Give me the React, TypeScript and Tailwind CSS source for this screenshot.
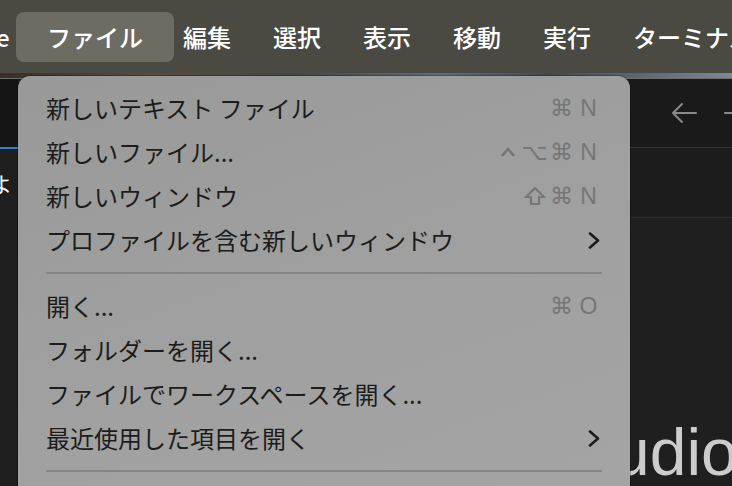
import React from "react";

const jp = { fontFamily: '"Noto Sans CJK JP", "Noto Sans", sans-serif' };

function Ctrl() {
  return (
    <span className="inline-flex w-[27px] justify-center">
      <svg width="16" height="12" viewBox="0 0 16 12">
        <path d="M2 10 L8 3 L14 10" fill="none" stroke="#767676" strokeWidth="2.6" strokeLinejoin="miter" />
      </svg>
    </span>
  );
}

function Shift() {
  return (
    <span className="inline-flex w-[27px] justify-center">
      <svg width="22" height="20" viewBox="0 0 22 20">
        <path d="M11 2 L20 11 L15 11 L15 18 L7 18 L7 11 L2 11 Z" fill="none" stroke="#767676" strokeWidth="2.2" strokeLinejoin="miter" />
      </svg>
    </span>
  );
}

function Key({ k }: { k: string }) {
  if (k === "ctrl") return <Ctrl />;
  if (k === "shift") return <Shift />;
  return <span className="inline-block w-[27px] text-center">{k}</span>;
}

function Shortcut({ keys }: { keys: string[] }) {
  return (
    <div
      className="flex items-center text-[23px] text-[#767676]"
      style={{ fontFamily: '"Liberation Sans", "DejaVu Sans", sans-serif' }}
    >
      {keys.map((k, i) => (
        <Key key={i} k={k} />
      ))}
    </div>
  );
}

function Chevron() {
  return (
    <svg width="12" height="17" viewBox="0 0 12 17" className="mr-[2px]">
      <path d="M2 1.5 L10 8.5 L2 15.5" fill="none" stroke="#1c1c1c" strokeWidth="2.6" strokeLinecap="round" strokeLinejoin="round" />
    </svg>
  );
}

function Row({ label, keys, sub }: { label: string; keys?: string[]; sub?: boolean }) {
  return (
    <div className="flex h-[44px] items-center justify-between pl-[28px] pr-[28px]">
      <span className="whitespace-nowrap text-[24px] text-[#1c1c1c]" style={jp}>
        {label}
      </span>
      {keys ? <Shortcut keys={keys} /> : sub ? <Chevron /> : null}
    </div>
  );
}

function Sep() {
  return (
    <div className="flex h-[22px] items-center pl-[28px] pr-[28px]">
      <div className="h-[2px] w-full bg-[#868686]" />
    </div>
  );
}

function ArrowLeft() {
  return (
    <svg width="28" height="24" viewBox="0 0 28 24" className="shrink-0">
      <path d="M26 12 H3 M12 3 L3 12 L12 21" fill="none" stroke="#8a8a8a" strokeWidth="2" strokeLinecap="round" strokeLinejoin="round" />
    </svg>
  );
}

function ArrowRight() {
  return (
    <svg width="28" height="24" viewBox="0 0 28 24" className="shrink-0">
      <path d="M2 12 H25 M16 3 L25 12 L16 21" fill="none" stroke="#8a8a8a" strokeWidth="2" strokeLinecap="round" strokeLinejoin="round" />
    </svg>
  );
}

export default function App() {
  const bar = ["編集", "選択", "表示", "移動", "実行", "ターミナル"];
  return (
    <div className="relative flex h-[486px] w-[732px] flex-col overflow-hidden bg-[#1a1a1a]">
      {/* menubar */}
      <div className="flex h-[73px] shrink-0 items-center whitespace-nowrap bg-[#4a4a43] text-[24px] font-medium text-white" style={jp}>
        <div className="w-[16px] shrink-0 overflow-hidden">
          <span className="-ml-[4px] block">e</span>
        </div>
        <div className="flex h-[50px] w-[158px] shrink-0 items-center justify-center rounded-[8px] bg-[#6c6c63]">
          ファイル
        </div>
        <div className="w-[9px] shrink-0" />
        {bar.map((b) => (
          <div key={b} className="w-[90px] shrink-0">
            {b}
          </div>
        ))}
      </div>
      {/* wallpaper strip */}
      <div className="h-[5px] shrink-0 bg-[linear-gradient(90deg,#3a2e24,#5e4a38_20%,#3f4646_40%,#5f6d78_60%,#3e4a50_75%,#7a8898)]" />
      {/* background window */}
      <div className="flex flex-1 border-t border-[#6e6e6e]">
        <div className="flex w-[18px] shrink-0 flex-col overflow-hidden bg-[#151515]">
          <div className="h-[68px] shrink-0" />
          <div className="h-[2px] shrink-0 bg-[#2d7fd8]" />
          <div className="flex h-[70px] items-center bg-[#1e1e1e] text-[21px] text-white" style={jp}>
            <span className="-ml-[9px] block">よ</span>
          </div>
          <div className="flex-1 bg-[#1e1e1e]" />
        </div>
        <div className="w-[612px] shrink-0" />
        <div className="flex flex-1 flex-col overflow-hidden">
          <div className="flex h-[68px] shrink-0 items-center gap-[25px] bg-[#1a1a1a] pl-[40px] whitespace-nowrap">
            <ArrowLeft />
            <ArrowRight />
          </div>
          <div className="h-[1px] shrink-0 bg-[#333333]" />
          <div className="h-[69px] shrink-0 bg-[#1c1c1c]" />
          <div className="h-[1px] shrink-0 bg-[#2c2c2c]" />
          <div className="flex-1 bg-[#1f1f1f] pt-[201px]">
            <div
              className="-ml-[17px] whitespace-nowrap text-[66px] leading-none text-[#cccccc]"
              style={{ fontFamily: '"Liberation Sans", Arial, sans-serif' }}
            >
              udio Code
            </div>
          </div>
        </div>
      </div>
      {/* file menu */}
      <div className="absolute left-[18px] top-[76px] bottom-0 w-[612px] rounded-t-[12px] bg-[linear-gradient(160deg,#999999,#a1a1a1_60%,#a4a4a4)] pt-[10px] shadow-[0_0_0_1px_rgba(0,0,0,0.25)]">
        <Row label="新しいテキスト ファイル" keys={["⌘", "N"]} />
        <Row label="新しいファイル..." keys={["ctrl", "⌥", "⌘", "N"]} />
        <Row label="新しいウィンドウ" keys={["shift", "⌘", "N"]} />
        <Row label="プロファイルを含む新しいウィンドウ" sub />
        <Sep />
        <Row label="開く..." keys={["⌘", "O"]} />
        <Row label="フォルダーを開く..." />
        <Row label="ファイルでワークスペースを開く..." />
        <Row label="最近使用した項目を開く" sub />
        <Sep />
      </div>
    </div>
  );
}
